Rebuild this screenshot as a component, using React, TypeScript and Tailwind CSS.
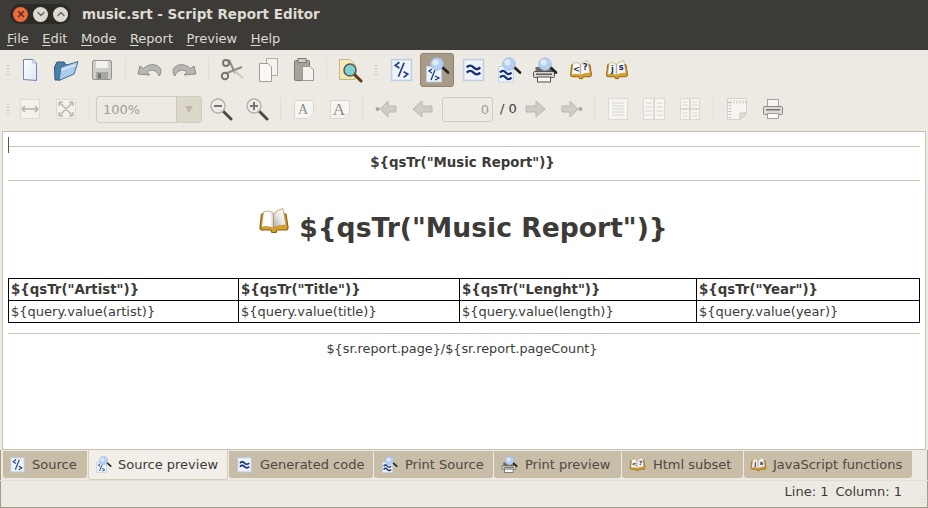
import React from 'react';
import { X, ChevronDown, ChevronUp } from 'lucide-react';

type IconProps = { size?: number };

const Page: React.FC<{ size?: number; children?: React.ReactNode }> = ({ size = 24, children }) => (
  <svg width={size} height={size} viewBox="0 0 24 24">
    <rect x="2.5" y="2.5" width="19" height="20" fill="#eff3fa" stroke="#bccde3" strokeWidth="1.4" />
    {children}
  </svg>
);

const SourceIcon: React.FC<IconProps> = ({ size = 24 }) => (
  <Page size={size}>
    <path d="M10 5 L6 8 L10 10.5 M9 19 L14.5 5.5 M14 14 L18 16.5 L14 19.5" fill="none" stroke="#1c3a86" strokeWidth="1.6" />
  </Page>
);

const Lens: React.FC<{ x?: number; y?: number }> = ({ x = 0, y = 0 }) => (
  <g transform={`translate(${x} ${y})`}>
    <path d="M17 10 L23 15.5" stroke="#222" strokeWidth="2.6" strokeLinecap="round" />
    <circle cx="12" cy="7" r="6.2" fill="#b4cff3" stroke="#a3bfe6" strokeWidth="1" />
    <circle cx="10.5" cy="5.5" r="3" fill="#dfebfb" />
  </g>
);

const SourcePreviewIcon: React.FC<IconProps> = ({ size = 26 }) => (
  <svg width={size} height={size} viewBox="0 0 26 26">
    <rect x="2.5" y="9.5" width="15" height="15.5" fill="#eef3fa" stroke="#bccde3" />
    <path d="M8 12 L5 14 L8 16 M7 23 L11 13 M11 19 L15 21 L11 23" fill="none" stroke="#1c3a86" strokeWidth="1.3" />
    <Lens x={1} y={0} />
  </svg>
);

const Waves: React.FC<{ y?: number; x?: number; w?: number }> = ({ y = 9, x = 6, w = 12 }) => (
  <path
    d={`M${x} ${y} q${w / 4} -3.4 ${w / 2} 0 t${w / 2} 0 M${x} ${y + 5} q${w / 4} -3.4 ${w / 2} 0 t${w / 2} 0`}
    fill="none"
    stroke="#16307c"
    strokeWidth="2.3"
  />
);

const GeneratedIcon: React.FC<IconProps> = ({ size = 24 }) => (
  <Page size={size}>
    <Waves y={10} x={5.5} w={13} />
  </Page>
);

const PrintSourceIcon: React.FC<IconProps> = ({ size = 26 }) => (
  <svg width={size} height={size} viewBox="0 0 26 26">
    <rect x="2.5" y="9.5" width="15" height="15.5" fill="#eef3fa" stroke="#c5d3e6" />
    <Waves x={4} y={15.5} w={11.5} />
    <Lens x={1} y={0} />
  </svg>
);

const PrintPreviewIcon: React.FC<IconProps> = ({ size = 26 }) => (
  <svg width={size} height={size} viewBox="0 0 26 26">
    <g transform="translate(0 5)">
      <rect x="3.5" y="5" width="17" height="7" fill="#6d6b66" />
      <rect x="1.5" y="9.5" width="21" height="6" rx="1" fill="#d9d7d2" stroke="#55534f" />
      <rect x="4" y="11.5" width="16" height="1.4" fill="#55534f" />
      <rect x="5.5" y="15" width="13" height="5" fill="#fbfaf8" stroke="#55534f" />
    </g>
    <Lens x={1} y={0} />
  </svg>
);

const BookIcon: React.FC<{ size?: number; left?: string; right?: string }> = ({ size = 24, left, right }) => (
  <svg width={size} height={size} viewBox="0 0 32 28">
    <defs>
      <linearGradient id="bookLeft" x1="0" y1="0" x2="1" y2="0">
        <stop offset="0" stopColor="#fffef4" />
        <stop offset="0.7" stopColor="#ffffff" />
        <stop offset="1" stopColor="#cfcfcf" />
      </linearGradient>
      <linearGradient id="bookRight" x1="0" y1="1" x2="1" y2="0">
        <stop offset="0" stopColor="#a9a9a9" />
        <stop offset="0.5" stopColor="#e8e8e8" />
        <stop offset="1" stopColor="#ffffff" />
      </linearGradient>
    </defs>
    <path
      d="M3.5 7 L2 20.5 Q2 23 4.5 23 L13 23 L14 25.5 L18 25.5 L19 23 L27.5 23 Q30 23 30 20.5 L28 7 Z"
      fill="#d99f2a"
      stroke="#8a5e0c"
      strokeWidth="1.2"
      strokeLinejoin="round"
    />
    <path d="M5.5 5 Q11 2.5 15.5 6.5 L15.5 21 Q10 18.5 3.5 20 Z" fill="url(#bookLeft)" stroke="#b58d38" strokeWidth="0.7" />
    <path d="M15.5 6.5 Q19 3 25 1.5 L28 18 Q20 18 15.5 21 Z" fill={left || right ? '#f5f6f9' : 'url(#bookRight)'} stroke="#b58d38" strokeWidth="0.7" />
    {left && (
      <text x="9.8" y="16" textAnchor="middle" fontSize="11" fontWeight="700" fontFamily="'DejaVu Sans', sans-serif" fill="#12296b">
        {left}
      </text>
    )}
    {right && (
      <text x="21.5" y="14" textAnchor="middle" fontSize="11" fontWeight="700" fontFamily="'DejaVu Sans', sans-serif" fill="#12296b">
        {right}
      </text>
    )}
  </svg>
);

const NewIcon = () => (
  <svg width="24" height="24" viewBox="0 0 24 24">
    <defs>
      <linearGradient id="newPage" x1="0" y1="0" x2="1" y2="1">
        <stop offset="0" stopColor="#ffffff" />
        <stop offset="1" stopColor="#dbe6f5" />
      </linearGradient>
    </defs>
    <path d="M5.5 1.5 H15 L18.5 5 V22.5 L5.5 21.5 Z" fill="url(#newPage)" stroke="#6a87b5" />
    <path d="M15 1.5 V5 H18.5" fill="#dfe7f2" stroke="#9db2d0" />
  </svg>
);

const OpenIcon = () => (
  <svg width="26" height="24" viewBox="0 0 26 24">
    <path d="M2 22 L1.5 9 L4 4 L11 4 L13 7 L19 6 L19 10 L7 22 Z" fill="#4d7fa8" stroke="#2e5476" />
    <path d="M6 22.5 L8 9 L25 3.5 L21 16 Z" fill="#a9cdec" stroke="#3d6d96" />
    <path d="M8 12 L23 7" stroke="#d6e8f8" strokeWidth="1.5" />
  </svg>
);

const SaveIcon = () => (
  <svg width="24" height="24" viewBox="0 0 24 24">
    <rect x="2.5" y="2.5" width="19" height="19" rx="1.5" fill="#cfcdc8" stroke="#96948f" />
    <rect x="6" y="3" width="12" height="7" fill="#f4f3f0" />
    <rect x="6" y="14" width="12" height="7" fill="#a8a6a1" />
    <rect x="8" y="15.5" width="3" height="5" fill="#6f6d68" />
  </svg>
);

const UndoIcon: React.FC<{ flip?: boolean }> = ({ flip }) => (
  <svg width="26" height="22" viewBox="0 0 26 22" style={flip ? { transform: 'scaleX(-1)' } : undefined}>
    <path
      d="M2 15 L4 7 L7.5 9.5 C12 5 20 4 24 9 C25.5 11 25 15 23 17 C22 12 15 9 11 13 L14 16 Z"
      fill="#b9b7b1"
      stroke="#8f8d87"
      strokeLinejoin="round"
    />
  </svg>
);

const CutIcon = () => (
  <svg width="24" height="24" viewBox="0 0 24 24" fill="none">
    <path d="M9 2 L15 15 M22 9 L7 15" stroke="#8e8c87" strokeWidth="2" />
    <path d="M14.5 13 L23 20" stroke="#c9c7c2" strokeWidth="2" />
    <circle cx="6" cy="5" r="3" stroke="#77756f" strokeWidth="2" />
    <circle cx="5" cy="18" r="3.2" stroke="#77756f" strokeWidth="2" />
  </svg>
);

const CopyIcon = () => (
  <svg width="24" height="26" viewBox="0 0 24 26">
    <rect x="10.5" y="1.5" width="11" height="17" fill="#f4f3f0" stroke="#b0aea9" />
    <path d="M3.5 6.5 H12 L15.5 10 V24.5 H3.5 Z" fill="#f9f8f6" stroke="#a09e99" />
  </svg>
);

const PasteIcon = () => (
  <svg width="24" height="26" viewBox="0 0 24 26">
    <rect x="2.5" y="3.5" width="15" height="20" rx="1" fill="#a6a39d" stroke="#7d7b75" />
    <rect x="6" y="1.5" width="8" height="4" fill="#d0cec9" stroke="#7d7b75" />
    <path d="M10.5 9.5 H18 L21.5 13 V23.5 H10.5 Z" fill="#f4f3f0" stroke="#9a9893" />
  </svg>
);

const FindIcon = () => (
  <svg width="26" height="26" viewBox="0 0 26 26">
    <path d="M2.5 2.5 H13 L18 7.5 V22.5 H2.5 Z" fill="#f5e9b8" stroke="#c5b787" />
    <path d="M17 17 L24 24" stroke="#5a3a18" strokeWidth="3" strokeLinecap="round" />
    <circle cx="13" cy="13" r="6" fill="#7fd0d2" stroke="#59584f" strokeWidth="1.6" />
  </svg>
);

const Grip = () => (
  <div className="flex flex-col gap-[2px] w-[4px] shrink-0">
    <span className="h-px w-[4px] bg-[#d3cfc4]" />
    <span className="h-px w-[4px] bg-[#d3cfc4]" />
    <span className="h-px w-[4px] bg-[#d3cfc4]" />
    <span className="h-px w-[4px] bg-[#d3cfc4]" />
  </div>
);

const Sep: React.FC<{ narrow?: boolean }> = ({ narrow }) => (
  <div className={`${narrow ? 'ml-[4px] mr-[5px]' : 'mx-[5px]'} w-px h-[24px] bg-[#e2ded3] shrink-0`} />
);

const Btn: React.FC<{ children: React.ReactNode; active?: boolean }> = ({ children, active }) => (
  <div
    className={`w-[34px] h-[34px] mx-px flex items-center justify-center rounded-[3px] shrink-0 ${
      active ? 'bg-[#a89c89] border border-[#8e8372]' : ''
    }`}
  >
    {children}
  </div>
);

const FitIcon: React.FC<{ out?: boolean }> = ({ out }) => (
  <svg width="22" height="22" viewBox="0 0 22 22">
    <rect x="1.5" y="1.5" width="19" height="19" fill="#f4f2ed" stroke="#dcd9d1" />
    {out ? (
      <path d="M4 4 L18 18 M18 4 L4 18 M4 4 H8 M4 4 V8 M18 4 H14 M18 4 V8 M4 18 H8 M4 18 V14 M18 18 H14 M18 18 V14" stroke="#bcb9b2" strokeWidth="1.6" fill="none" />
    ) : (
      <path d="M3 11 H19 M3 11 L6 8 M3 11 L6 14 M19 11 L16 8 M19 11 L16 14" stroke="#b5b3ac" strokeWidth="1.6" fill="none" />
    )}
  </svg>
);

const ZoomIcon: React.FC<{ plus?: boolean }> = ({ plus }) => (
  <svg width="24" height="24" viewBox="0 0 24 24">
    <path d="M14 14 L22 22" stroke="#4c4a46" strokeWidth="3" strokeLinecap="round" />
    <circle cx="9" cy="9" r="7" fill="#eeece8" stroke="#b3b1ab" strokeWidth="1.4" />
    <path d={plus ? 'M5 9 H13 M9 5 V13' : 'M5 9 H13'} stroke="#77756f" strokeWidth="2" />
  </svg>
);

const FontIcon: React.FC<{ big?: boolean }> = ({ big }) => (
  <svg width="22" height="24" viewBox="0 0 22 24">
    <path d="M1.5 3.5 H20.5 V16 L15 21.5 H1.5 Z" fill="#f6f5f1" stroke="#dbd8d0" />
    <text x="10" y={big ? 18 : 17} textAnchor="middle" fontSize={big ? 17 : 14} fontFamily="'Liberation Serif', serif" fill="#8f8d87">
      A
    </text>
  </svg>
);

const NavIcon: React.FC<{ right?: boolean; end?: boolean }> = ({ right, end }) => (
  <svg width="22" height="22" viewBox="0 0 22 22" style={right ? { transform: 'scaleX(-1)' } : undefined}>
    <path d={end ? 'M5 11 L13 3 V8 H21 V14 H13 V19 Z' : 'M2 11 L11 3 V8 H21 V14 H11 V19 Z'} fill="#cfccc5" stroke="#bab7b0" strokeLinejoin="round" />
    {end && <circle cx="2.5" cy="11" r="2" fill="#a9a69f" />}
  </svg>
);

const SinglePage = () => (
  <svg width="22" height="24" viewBox="0 0 22 24">
    <rect x="1.5" y="1.5" width="19" height="21" fill="#f6f5f1" stroke="#dcd9d1" />
    <path d="M5 6 H17 M5 9 H17 M5 12 H17 M5 15 H17 M5 18 H17" stroke="#d7d4cc" />
  </svg>
);

const DoublePage = () => (
  <svg width="24" height="24" viewBox="0 0 24 24">
    <rect x="1.5" y="1.5" width="10" height="21" fill="#f6f5f1" stroke="#dcd9d1" />
    <rect x="12.5" y="1.5" width="10" height="21" fill="#f6f5f1" stroke="#dcd9d1" />
    <path d="M3.5 6 H9.5 M3.5 10 H9.5 M3.5 14 H9.5 M3.5 18 H9.5 M14.5 6 H20.5 M14.5 10 H20.5 M14.5 14 H20.5 M14.5 18 H20.5" stroke="#d7d4cc" />
  </svg>
);

const GridPage = () => (
  <svg width="22" height="24" viewBox="0 0 22 24">
    <rect x="1.5" y="1.5" width="9" height="10" fill="#f6f5f1" stroke="#dcd9d1" />
    <rect x="11.5" y="1.5" width="9" height="10" fill="#f6f5f1" stroke="#dcd9d1" />
    <rect x="1.5" y="12.5" width="9" height="10" fill="#f6f5f1" stroke="#dcd9d1" />
    <rect x="11.5" y="12.5" width="9" height="10" fill="#f6f5f1" stroke="#dcd9d1" />
    <path d="M3.5 5 H8.5 M3.5 8 H8.5 M13.5 5 H18.5 M13.5 8 H18.5 M3.5 16 H8.5 M3.5 19 H8.5 M13.5 16 H18.5 M13.5 19 H18.5" stroke="#d7d4cc" />
  </svg>
);

const PageSetup = () => (
  <svg width="22" height="24" viewBox="0 0 22 24">
    <path d="M1.5 1.5 H20.5 V16 L14 22.5 H1.5 Z" fill="#f6f5f1" stroke="#d5d2ca" />
    <path d="M1.5 5 H20.5" stroke="#c6c3bb" strokeDasharray="1 2" strokeWidth="3" />
    <path d="M4 5 V22" stroke="#c6c3bb" strokeDasharray="1 2" strokeWidth="3" />
    <path d="M20.5 16 L14 22.5 V16 Z" fill="#e4e1da" stroke="#c6c3bb" />
  </svg>
);

const PrinterIcon = () => (
  <svg width="24" height="24" viewBox="0 0 24 24">
    <rect x="6.5" y="2.5" width="11" height="7" fill="#f5f4f1" stroke="#a5a39e" />
    <rect x="2.5" y="9.5" width="19" height="8" rx="1" fill="#dcdad5" stroke="#8a8883" />
    <rect x="5" y="12" width="14" height="1.5" fill="#77756f" />
    <rect x="6.5" y="16.5" width="11" height="5" fill="#fbfaf8" stroke="#a5a39e" />
  </svg>
);

const menus: [string, string][] = [
  ['F', 'ile'],
  ['E', 'dit'],
  ['M', 'ode'],
  ['R', 'eport'],
  ['P', 'review'],
  ['H', 'elp'],
];

const tabs: { label: string; icon: React.ReactNode; cls: string; active?: boolean }[] = [
  { label: 'Source', icon: <SourceIcon size={17} />, cls: 'w-[84px] pl-[6px] gap-[6px]' },
  { label: 'Source preview', icon: <SourcePreviewIcon size={17} />, cls: 'w-[140px] pl-[6px] gap-[6px]', active: true },
  { label: 'Generated code', icon: <GeneratedIcon size={17} />, cls: 'w-[144px] pl-[7px] gap-[7px]' },
  { label: 'Print Source', icon: <PrintSourceIcon size={17} />, cls: 'w-[119px] pl-[7px] gap-[7px]' },
  { label: 'Print preview', icon: <PrintPreviewIcon size={17} />, cls: 'w-[127px] pl-[7px] gap-[7px]' },
  { label: 'Html subset', icon: <BookIcon size={17} left="<" right="?" />, cls: 'w-[121px] pl-[7px] gap-[7px]' },
  { label: 'JavaScript functions', icon: <BookIcon size={17} left="j" right="s" />, cls: 'w-[168px] pl-[6px] gap-[6px]' },
];

const columns = [
  { head: '${qsTr("Artist")}', value: '${query.value(artist)}', width: 'w-[230px]' },
  { head: '${qsTr("Title")}', value: '${query.value(title)}', width: 'w-[221px]' },
  { head: '${qsTr("Lenght")}', value: '${query.value(length)}', width: 'w-[237px]' },
  { head: '${qsTr("Year")}', value: '${query.value(year)}', width: 'flex-1' },
];

export default function App() {
  return (
    <div className="w-[928px] h-[508px] flex flex-col overflow-hidden bg-[#edeae3] font-['DejaVu_Sans',sans-serif] text-[13px] text-[#3c3b37]">
      {/* title bar */}
      <div className="h-[28px] bg-[#3c3b37] flex items-center shrink-0 pl-[10px]">
        <div className="flex items-center gap-[5px] bg-[#2b2a27] rounded-full px-[3px] h-[20px]">
          <span className="w-[15px] h-[15px] rounded-full bg-[#ec6a3c] flex items-center justify-center">
            <X size={10} strokeWidth={3} className="text-[#4a2a1c]" />
          </span>
          <span className="w-[15px] h-[15px] rounded-full bg-[#dcd9d0] flex items-center justify-center">
            <ChevronDown size={12} strokeWidth={3} className="text-[#6b6a64]" />
          </span>
          <span className="w-[15px] h-[15px] rounded-full bg-[#dcd9d0] flex items-center justify-center">
            <ChevronUp size={12} strokeWidth={3} className="text-[#6b6a64]" />
          </span>
        </div>
        <span className="ml-[11px] text-[13.5px] font-bold text-[#dfdbd2] whitespace-nowrap">music.srt - Script Report Editor</span>
      </div>

      {/* menu bar */}
      <div className="h-[22px] bg-[#3c3b37] flex items-start shrink-0 pl-[7px] gap-[13.5px] leading-[21px] text-[#dfdbd2]">
        {menus.map(([key, rest]) => (
          <span key={key}>
            <span className="underline underline-offset-2">{key}</span>
            {rest}
          </span>
        ))}
      </div>

      {/* main toolbar */}
      <div className="h-[39px] flex items-center shrink-0 pl-[6px]">
        <Grip />
        <div className="w-[2px]" />
        <Btn><NewIcon /></Btn>
        <Btn><OpenIcon /></Btn>
        <Btn><SaveIcon /></Btn>
        <Sep />
        <Btn><UndoIcon /></Btn>
        <Btn><UndoIcon flip /></Btn>
        <Sep />
        <Btn><CutIcon /></Btn>
        <Btn><CopyIcon /></Btn>
        <Btn><PasteIcon /></Btn>
        <Sep narrow />
        <Btn><FindIcon /></Btn>
        <div className="w-[6px]" />
        <Grip />
        <div className="w-[5px]" />
        <Btn><SourceIcon size={25} /></Btn>
        <Btn active><SourcePreviewIcon /></Btn>
        <Btn><GeneratedIcon size={25} /></Btn>
        <Btn><PrintSourceIcon /></Btn>
        <Btn><PrintPreviewIcon /></Btn>
        <Btn><BookIcon left="<" right="?" /></Btn>
        <Btn><BookIcon left="j" right="s" /></Btn>
      </div>

      {/* view toolbar */}
      <div className="h-[40px] flex items-center shrink-0 pl-[6px]">
        <Grip />
        <div className="w-[2px]" />
        <Btn><FitIcon /></Btn>
        <Btn><FitIcon out /></Btn>
        <Sep />
        <div className="ml-[1px] w-[106px] h-[27px] flex border border-[#d5ccba] rounded-[3px] text-[#a09e96] shrink-0">
          <div className="flex-1 pl-[6px] leading-[25px]">100%</div>
          <div className="w-[25px] bg-[#dcd7cb] border-l border-[#cfc8b8] flex items-center justify-center">
            <svg width="10" height="9" viewBox="0 0 10 9">
              <path d="M1 1 H9 L5 8 Z" fill="#bdb8a6" />
            </svg>
          </div>
        </div>
        <div className="w-[1px]" />
        <Btn><ZoomIcon /></Btn>
        <Btn><ZoomIcon plus /></Btn>
        <Sep />
        <Btn><FontIcon /></Btn>
        <Btn><FontIcon big /></Btn>
        <Sep narrow />
        <Btn><NavIcon end /></Btn>
        <Btn><NavIcon /></Btn>
        <div className="ml-[2px] w-[51px] h-[25px] border border-[#d5ccba] rounded-[3px] text-right pr-[3px] leading-[23px] text-[#a09e96] shrink-0">0</div>
        <span className="ml-[7px] w-[18px] whitespace-nowrap shrink-0">/ 0</span>
        <Btn><NavIcon right /></Btn>
        <Btn><NavIcon right end /></Btn>
        <Sep narrow />
        <Btn><SinglePage /></Btn>
        <Btn><DoublePage /></Btn>
        <Btn><GridPage /></Btn>
        <Sep />
        <Btn><PageSetup /></Btn>
        <Btn><PrinterIcon /></Btn>
      </div>

      {/* document */}
      <div className="mx-[2px] mt-[2px] h-[319px] shrink-0 relative bg-white border border-[#c9c2b4] pl-[5px] pr-[5px] pt-[14px] w-[924px]">
        <div className="absolute left-[5px] top-[5px] w-px h-[16px] bg-[#555]" />
        <div className="h-px bg-[#c9c4ba]" />
        <div className="h-[33px] pb-[2px] pr-[3px] flex items-center justify-center font-bold text-[13.33px]">{'${qsTr("Music Report")}'}</div>
        <div className="h-px bg-[#c9c4ba]" />
        <div className="h-[97px] pb-[5px] pr-[2px] flex items-center justify-center gap-[9px]">
          <span className="-mt-[12px]">
            <BookIcon size={32} />
          </span>
          <span className="text-[26.6px] font-bold mt-[2px]">{'${qsTr("Music Report")}'}</span>
        </div>
        <div className="flex flex-col border-t border-l border-black w-[912px]">
          <div className="flex h-[22px] font-bold text-[13.33px]">
            {columns.map((c) => (
              <div key={c.head} className={`${c.width} px-[2px] border-r border-b border-black leading-[22px]`}>{c.head}</div>
            ))}
          </div>
          <div className="flex h-[22px]">
            {columns.map((c) => (
              <div key={c.value} className={`${c.width} px-[2px] border-r border-b border-black leading-[22px]`}>{c.value}</div>
            ))}
          </div>
        </div>
        <div className="h-px bg-[#c9c4ba] mt-[10px]" />
        <div className="h-[30px] pr-[4px] flex items-center justify-center text-[12.8px]">{'${sr.report.page}/${sr.report.pageCount}'}</div>
      </div>

      {/* tabs */}
      <div className="h-[31px] shrink-0 flex pl-[3px] gap-px items-start border-b border-[#e2ded4] shadow-[inset_1px_0_0_#a59c88,inset_-1px_0_0_#a59c88]">
        {tabs.map((t) => (
          <div
            key={t.label}
            className={`${t.cls} flex items-center shrink-0 rounded-b-[3px] whitespace-nowrap ${
              t.active ? 'h-[30px] bg-[#f2efe9] border border-t-0 border-[#d5ceba]' : 'h-[27px] mt-[1px] bg-[#c8bda6] text-[#4b4a44]'
            }`}
          >
            {t.icon}
            <span>{t.label}</span>
          </div>
        ))}
      </div>

      {/* status bar */}
      <div className="relative flex-1 flex items-center justify-end pr-[26px] pb-[6px] gap-[7px] shadow-[inset_1px_0_0_#a59c88,inset_-1px_0_0_#a59c88,inset_0_-1px_0_#a59c88]">
        <span>Line: 1</span>
        <span>Column: 1</span>
        <svg className="absolute right-[2px] bottom-[2px]" width="12" height="12" viewBox="0 0 12 12">
          <path d="M10 2 h1 v1 h-1 Z M7 5 h1 v1 h-1 Z M10 5 h1 v1 h-1 Z M4 8 h1 v1 h-1 Z M7 8 h1 v1 h-1 Z M10 8 h1 v1 h-1 Z" fill="#d3cdbf" />
        </svg>
      </div>
    </div>
  );
}
